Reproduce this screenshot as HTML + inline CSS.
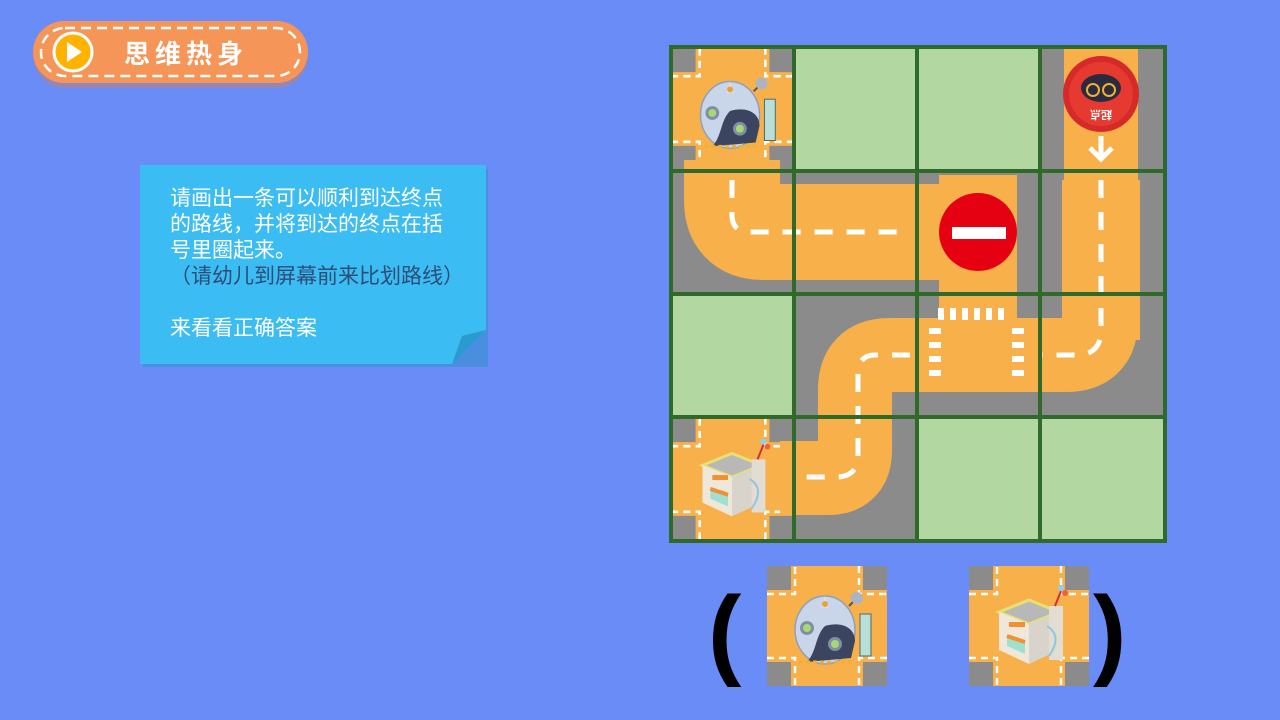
<!DOCTYPE html>
<html><head><meta charset="utf-8"><style>
html,body{margin:0;padding:0}
body{width:1280px;height:720px;background:#6a8cf6;position:relative;overflow:hidden;font-family:"Liberation Sans","Noto Sans CJK SC",sans-serif}
.txt{position:absolute;left:170px;top:186px;color:#fff;font-size:21px;line-height:26px;white-space:pre}
</style></head><body>
<svg width="1280" height="720" style="position:absolute;left:0;top:0">
<defs>
<symbol id="tile" viewBox="0 0 120 120">
<rect width="120" height="120" fill="#f8b04a"/>
<g fill="#8b8b8b"><rect x="0" y="0" width="24" height="24"/><rect x="96" y="0" width="24" height="24"/><rect x="0" y="96" width="24" height="24"/><rect x="96" y="96" width="24" height="24"/></g>
<g fill="none" stroke="#fff" stroke-width="2.5" stroke-dasharray="7 5">
<path d="M0 28H28V0M92 0V28H120M0 92H28V120M120 92H92V120"/></g>
</symbol>
<symbol id="dome" viewBox="0 0 120 120">
<ellipse cx="58" cy="64" rx="30" ry="34" fill="#c9d5e8" stroke="#8fa0bc" stroke-width="1.5"/>
<path d="M58 30L54 42 62 42Z" fill="#d6e0ee"/>
<circle cx="58" cy="38" r="3" fill="#f0a030"/>
<path d="M58 60C75 55 88 62 88 75L84 92 40 96C50 85 48 70 58 60Z" fill="#3b4560"/>
<circle cx="40" cy="62" r="7" fill="#7f8fa5"/><circle cx="40" cy="62" r="4" fill="#a8d870"/>
<circle cx="68" cy="78" r="7" fill="#7f8fa5"/><circle cx="68" cy="78" r="4" fill="#a8d870"/>
<path d="M32 96H86" stroke="#f0b030" stroke-width="3" stroke-dasharray="4 3"/>
<path d="M82 40L92 30" stroke="#556" stroke-width="2"/><circle cx="90" cy="32" r="6" fill="#aab4c6"/>
<rect x="93" y="48" width="11" height="42" fill="#b9e0d8" stroke="#4a6a70"/>
</symbol>
<symbol id="shop" viewBox="0 0 120 120">
<path d="M30 46L60 34 90 46 60 58Z" fill="#b8b8b8" stroke="#e8e070" stroke-width="3"/>
<path d="M30 46V84L60 98V58Z" fill="#efe8da"/><path d="M60 58V98L90 84V46Z" fill="#d8d4cc"/>
<rect x="40" y="56" width="16" height="5" fill="#f09030"/>
<path d="M38 80L56 88V76L38 70Z" fill="#9fe0d0"/><path d="M38 70L56 76" stroke="#f09030" stroke-width="4"/>
<rect x="80" y="40" width="14" height="54" fill="#e2dcd2"/><path d="M78 60Q94 70 80 90" stroke="#8cc8e0" stroke-width="2" fill="none"/>
<circle cx="92" cy="22" r="3" fill="#8cd0f0"/><circle cx="96" cy="27" r="3" fill="#f06040"/><path d="M92 25L86 40" stroke="#c33" stroke-width="2"/>
</symbol>
</defs>

<rect x="33" y="21" width="275" height="64" rx="32" fill="#e87a40" opacity=".35" transform="translate(0,3)"/>
<rect x="33" y="21" width="275" height="62" rx="31" fill="#f59557"/>
<rect x="41" y="28" width="259" height="48" rx="24" fill="none" stroke="#fff" stroke-width="2.5" stroke-dasharray="10 6"/>
<circle cx="73" cy="52" r="19" fill="#ffb300" stroke="#fff" stroke-width="3"/>
<path d="M67 42L82 52 67 62Z" fill="#fff"/>
<text x="124" y="63" fill="#fff" font-size="26" font-weight="bold" letter-spacing="5" font-family="Noto Sans CJK SC,sans-serif">思维热身</text>

<rect x="143" y="169" width="345" height="198" fill="#2a8fc8" opacity=".5"/>
<path d="M140 165H486V330L452 364H140Z" fill="#3bbcf2"/>
<path d="M486 330L452 364L462 336Z" fill="#2a9ad0"/>

<rect x="669" y="45" width="498" height="498" fill="#8b8b8b"/>
<g fill="#b3d7a0">
<rect x="794" y="47" width="123" height="124"/><rect x="917" y="47" width="123" height="124"/>
<rect x="671" y="294" width="123" height="123"/><rect x="917" y="417" width="123" height="124"/><rect x="1040" y="417" width="125" height="124"/>
</g>
<use href="#tile" x="671" y="47" width="123" height="124"/>
<use href="#tile" x="671" y="417" width="123" height="124"/>
<g fill="none" stroke="#f8b04a" stroke-linejoin="round">
<path d="M732 160V200Q732 232 764 232H1000" stroke-width="96"/>
<path d="M978 175V390" stroke-width="78"/>
<path d="M1101 47V320Q1101 355 1066 355H890Q855 355 855 390V450Q855 478 828 478H780" stroke-width="74"/>
<path d="M1101 180V340" stroke-width="78"/>
</g>
<g fill="none" stroke="#fff" stroke-width="5" stroke-dasharray="18 14">
<path d="M732 180V215Q732 232 750 232H910"/>
<path d="M1101 180V330Q1101 355 1076 355H1040"/>
<path d="M910 355H875Q858 355 858 375V455Q858 477 836 477H800"/>
</g>
<g fill="#fff"><rect x="938" y="308" width="6" height="12"/><rect x="950" y="308" width="6" height="12"/><rect x="962" y="308" width="6" height="12"/><rect x="974" y="308" width="6" height="12"/><rect x="986" y="308" width="6" height="12"/><rect x="998" y="308" width="6" height="12"/>
<rect x="929" y="328" width="12" height="6"/><rect x="929" y="342" width="12" height="6"/><rect x="929" y="356" width="12" height="6"/><rect x="929" y="370" width="12" height="6"/>
<rect x="1012" y="328" width="12" height="6"/><rect x="1012" y="342" width="12" height="6"/><rect x="1012" y="356" width="12" height="6"/><rect x="1012" y="370" width="12" height="6"/></g>
<g stroke="#2f6a2a" stroke-width="4">
<path d="M794 45V543M917 45V543M1040 45V543M669 171H1167M669 294H1167M669 417H1167"/>
</g>
<rect x="671" y="47" width="494" height="494" fill="none" stroke="#2f6a2a" stroke-width="4"/>
<use href="#dome" x="673" y="52" width="118" height="118"/>
<use href="#shop" x="673" y="420" width="118" height="118"/>
<circle cx="978" cy="232" r="39" fill="#e50012"/>
<rect x="952" y="227" width="54" height="12" fill="#fff"/>
<circle cx="1101" cy="94" r="38" fill="#d62a2a"/><circle cx="1101" cy="94" r="32" fill="#e63a30"/>
<ellipse cx="1101" cy="88" rx="20" ry="14" fill="#2a2a40"/>
<circle cx="1093" cy="90" r="6" fill="none" stroke="#f0b030" stroke-width="2"/><circle cx="1109" cy="90" r="6" fill="none" stroke="#f0b030" stroke-width="2"/>
<text x="1101" y="119" fill="#fff" font-size="11" font-weight="bold" text-anchor="middle" transform="rotate(180 1101 115)">起点</text>
<path d="M1101 136V158M1090 148L1101 159 1112 148" stroke="#fff" stroke-width="5" fill="none"/>

<use href="#tile" x="767" y="566" width="120" height="120"/>
<use href="#dome" x="767" y="566" width="120" height="120"/>
<use href="#tile" x="969" y="566" width="120" height="120"/>
<use href="#shop" x="969" y="566" width="120" height="120"/>
<text x="708" y="666" font-size="100" font-weight="bold" font-family="Liberation Sans,sans-serif">(</text>
<text x="1093" y="666" font-size="100" font-weight="bold" font-family="Liberation Sans,sans-serif">)</text>
</svg>
<div class="txt">请画出一条可以顺利到达终点
的路线，并将到达的终点在括
号里圈起来。
<span style="color:#2d4e78">（请幼儿到屏幕前来比划路线）</span>

来看看正确答案</div>
</body></html>
